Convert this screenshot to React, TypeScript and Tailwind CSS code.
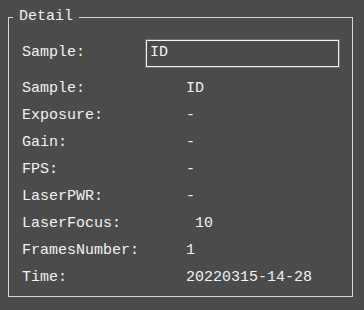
import React from 'react';

const rows: Array<[string, string]> = [
    ['Sample:', 'ID'],
    ['Exposure:', '-'],
    ['Gain:', '-'],
    ['FPS:', '-'],
    ['LaserPWR:', '-'],
    ['LaserFocus:', ' 10'],
    ['FramesNumber:', '1'],
    ['Time:', '20220315-14-28'],
];

const App: React.FC = () => {
    return (
        <div className="w-[364px] h-[310px] bg-[#4b4b4b] pt-[7px] text-[#f2f2f2] font-['Liberation_Mono',monospace] text-[15px]">
            <fieldset className="ml-[8px] mr-[11px] h-[290px] border border-[#d6d6d6] p-0 m-0">
                <legend className="ml-[4px] px-[6px] leading-[20px]">Detail</legend>

                <div className="pl-[13px] pr-[13px]">
                    {/* Sample input */}
                    <div className="flex items-center mt-[13px]">
                        <span className="w-[124px]">Sample:</span>
                        <div className="w-[193px] h-[27px] border border-[#f4f4f4] outline outline-1 outline-[#6e6e6e] flex items-center px-[3px]">
                            ID
                        </div>
                    </div>

                    <div className="mt-[9px]">
                        {rows.map(([label, value]) => (
                            <div key={label} className="flex items-center h-[27px]">
                                <span className="w-[164px]">{label}</span>
                                <span className="whitespace-pre">{value}</span>
                            </div>
                        ))}
                    </div>
                </div>
            </fieldset>
        </div>
    );
};

export default App;
